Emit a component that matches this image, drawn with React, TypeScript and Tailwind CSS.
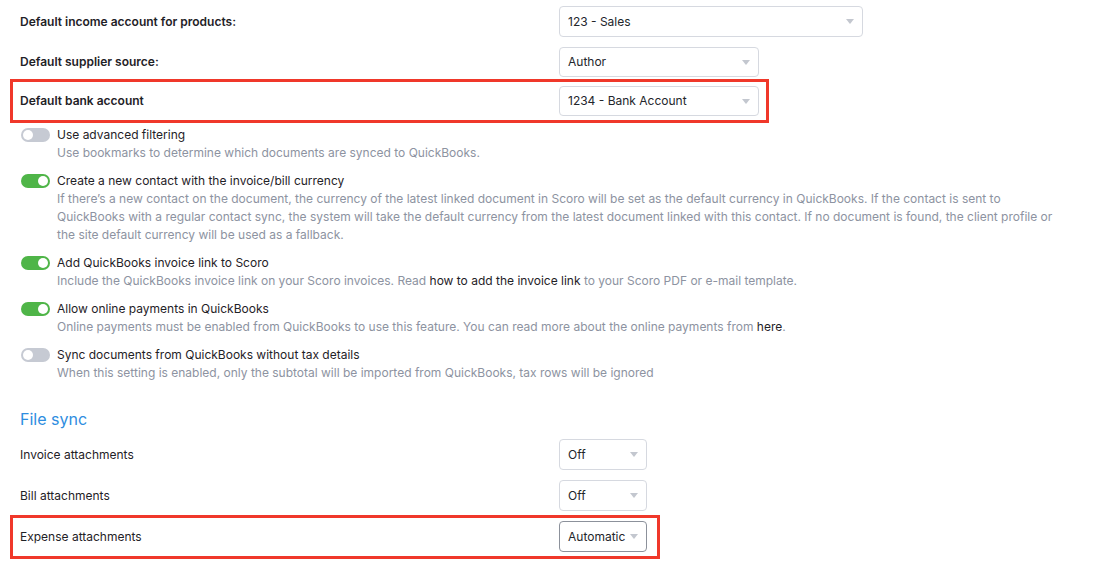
import React from "react";

const font = { fontFamily: "Inter, 'Noto Sans', sans-serif" };

function Caret() {
  return (
    <svg width="8" height="5" viewBox="0 0 8 5" className="shrink-0">
      <path d="M0 0 H8 L4 5 Z" fill="#c3c7cf" />
    </svg>
  );
}

function Select({
  value,
  width,
  height = "h-[30px]",
  active,
}: {
  value: string;
  width: string;
  height?: string;
  active?: boolean;
}) {
  return (
    <div
      className={`flex ${height} ${width} items-center justify-between rounded-[4px] border bg-white pl-[8px] pr-[8px] text-[12px] text-[#23262b] ${
        active ? "border-[#8c919b]" : "border-[#d6d9e0]"
      }`}
    >
      <span>{value}</span>
      <Caret />
    </div>
  );
}

function Toggle({ on }: { on?: boolean }) {
  return (
    <div
      className={`mt-[3px] flex h-[14px] w-[29px] shrink-0 items-center rounded-full px-[2px] ${
        on ? "justify-end bg-[#4fb548]" : "justify-start bg-[#c6cad3]"
      }`}
    >
      <div className="h-[10px] w-[10px] rounded-full bg-white" />
    </div>
  );
}

function ToggleRow({
  on,
  title,
  children,
}: {
  on?: boolean;
  title: string;
  children: React.ReactNode;
}) {
  return (
    <div className="flex gap-[7px] pl-[21px]">
      <Toggle on={on} />
      <div className="flex flex-col">
        <div className="text-[12px] leading-[19px] text-[#1f2227]">{title}</div>
        <div className="max-w-[1002px] text-[12px] leading-[18px] text-[#8d93a1]">{children}</div>
      </div>
    </div>
  );
}

function FieldRow({
  label,
  bold,
  children,
}: {
  label: string;
  bold?: boolean;
  children: React.ReactNode;
}) {
  return (
    <div className="flex items-center">
      <div className={`w-[539px] text-[12px] text-[#1f2227] ${bold ? "font-semibold" : ""}`}>
        {label}
      </div>
      {children}
    </div>
  );
}

function Marked({ children, className }: { children: React.ReactNode; className: string }) {
  return (
    <div className={`ml-[-10px] flex w-fit border-[3px] border-[#f0382a] pl-[7px] ${className}`}>
      {children}
    </div>
  );
}

export default function App() {
  return (
    <div className="h-[570px] w-[1100px] overflow-hidden bg-white" style={font}>
      <div className="flex flex-col pl-[20px] pt-[6px]">
        <FieldRow label="Default income account for products:" bold>
          <Select value="123 - Sales" width="w-[304px]" height="h-[31px]" />
        </FieldRow>
        <div className="h-[10px]" />
        <FieldRow label="Default supplier source:" bold>
          <Select value="Author" width="w-[200px]" />
        </FieldRow>
        <div className="h-[2px]" />
        <Marked className="py-[4px] pr-[7px]">
          <FieldRow label="Default bank account" bold>
            <Select value="1234 - Bank Account" width="w-[200px]" />
          </FieldRow>
        </Marked>
      </div>

      <div className="mt-[2px] flex flex-col gap-[9px]">
        <ToggleRow title="Use advanced filtering">
          Use bookmarks to determine which documents are synced to QuickBooks.
        </ToggleRow>
        <ToggleRow on title="Create a new contact with the invoice/bill currency">
          If there’s a new contact on the document, the currency of the latest linked document in Scoro will be set as the default currency in QuickBooks. If the contact is sent to QuickBooks with a regular contact sync, the system will take the default currency from the latest document linked with this contact. If no document is found, the client profile or the site default currency will be used as a fallback.
        </ToggleRow>
        <ToggleRow on title="Add QuickBooks invoice link to Scoro">
          Include the QuickBooks invoice link on your Scoro invoices. Read{" "}
          <span className="text-[#1f2227]">how to add the invoice link</span> to your Scoro PDF or e-mail template.
        </ToggleRow>
        <ToggleRow on title="Allow online payments in QuickBooks">
          Online payments must be enabled from QuickBooks to use this feature. You can read more about the online payments from{" "}
          <span className="text-[#1f2227]">here</span>.
        </ToggleRow>
        <ToggleRow title="Sync documents from QuickBooks without tax details">
          When this setting is enabled, only the subtotal will be imported from QuickBooks, tax rows will be ignored
        </ToggleRow>
      </div>

      <div className="flex flex-col pl-[20px]">
        <div className="mt-[25px] text-[16px] leading-[24px] text-[#2e8de0]">File sync</div>
        <div className="h-[8px]" />
        <FieldRow label="Invoice attachments">
          <Select value="Off" width="w-[88px]" height="h-[31px]" />
        </FieldRow>
        <div className="h-[10px]" />
        <FieldRow label="Bill attachments">
          <Select value="Off" width="w-[88px]" height="h-[31px]" />
        </FieldRow>
        <div className="h-[4px]" />
        <Marked className="pt-[3px] pb-[4px] pr-[10px]">
          <FieldRow label="Expense attachments">
            <Select value="Automatic" width="w-[88px]" height="h-[31px]" active />
          </FieldRow>
        </Marked>
      </div>
    </div>
  );
}
